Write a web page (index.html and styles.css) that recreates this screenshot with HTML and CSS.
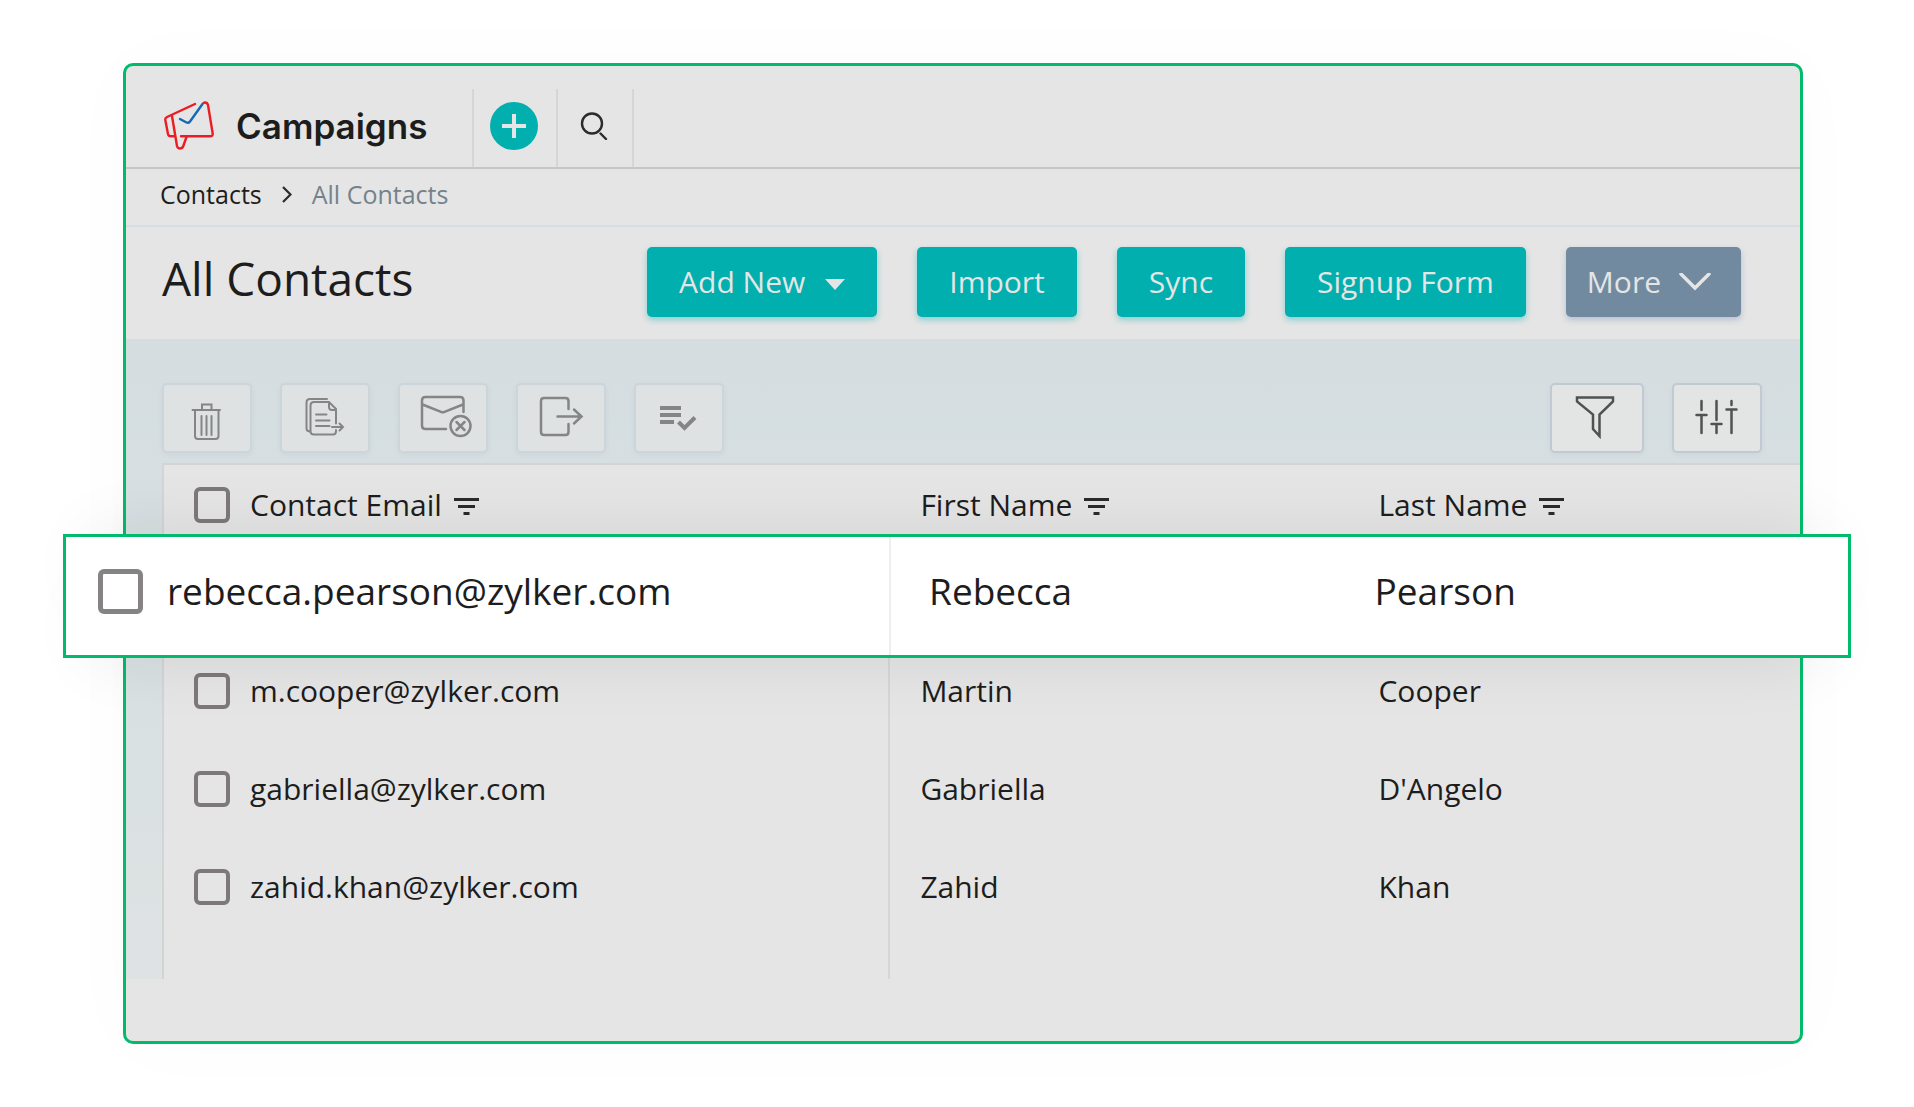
FILE: index.html
```html
<!DOCTYPE html>
<html lang="en">
<head>
  <meta charset="utf-8">
  <meta name="viewport" content="width=device-width, initial-scale=1">
  <title>Campaigns - All Contacts</title>
  <link rel="stylesheet" href="styles.css">
</head>
<body>
  <main class="panel">
    <header class="topbar">
      <a class="brand" href="#">
        <svg class="brand__logo" viewBox="0 0 50 50" aria-hidden="true">
          <g fill="none" stroke-width="2.4" stroke-linecap="round" stroke-linejoin="round">
            <g stroke="#ec1c24">
              <path d="M31 3 3 16Q1 17 1.300 19L4 33Q4.500 35.300 7 35.300H10"/>
              <path d="M8 15 13 45Q13.600 47.500 16 47.500T19.300 45L22.500 36"/>
              <path d="M17 35.300H46Q49 35.300 48.700 32.500L44 4Q43.300 1.300 40.500 1.500L39.500 2"/>
            </g>
            <path stroke="#1568b8" d="M16 18 22.500 21.500Q24.500 22.500 26 20.500L38.500 3"/>
          </g>
        </svg>
        <span class="brand__name">Campaigns</span>
      </a>
      <div class="topbar__cell topbar__cell--add">
        <button class="round-button" type="button" aria-label="Create">
          <svg class="round-button__icon" viewBox="0 0 24 24" aria-hidden="true">
            <path d="M12 0V24M0 12H24" fill="none" stroke="#e5e5e5" stroke-width="4"/>
          </svg>
        </button>
      </div>
      <div class="topbar__cell topbar__cell--search">
        <button class="plain-button" type="button" aria-label="Search">
          <svg class="plain-button__icon" viewBox="0 0 28 28" aria-hidden="true">
            <g fill="none" stroke="#2b2b2b" stroke-width="2.400" stroke-linecap="round">
              <circle cx="12" cy="11.500" r="10"/>
              <path d="M20.500 21.500 26 27"/>
            </g>
          </svg>
        </button>
      </div>
    </header>

    <nav class="crumbs" aria-label="Breadcrumb">
      <a class="crumbs__link" href="#">Contacts</a>
      <svg class="crumbs__arrow" viewBox="0 0 10 18" aria-hidden="true">
        <path d="M1 2 8.500 9.500 1 17" fill="none" stroke="#2b2b2b" stroke-width="2.200"/>
      </svg>
      <span class="crumbs__current">All Contacts</span>
    </nav>

    <div class="heading">
      <h1 class="heading__title">All Contacts</h1>
      <div class="heading__actions">
        <button class="button" type="button" aria-haspopup="menu">Add New
          <svg class="button__caret" viewBox="0 0 20 16" aria-hidden="true"><path d="M0 5H20L10 16Z" fill="#e5e5e5"/></svg>
        </button>
        <button class="button" type="button">Import</button>
        <button class="button" type="button">Sync</button>
        <button class="button" type="button">Signup Form</button>
        <button class="button button--more" type="button" aria-haspopup="menu">More
          <svg class="button__chevron" viewBox="0 0 32 18" aria-hidden="true"><path d="M2 1 16 15 30 1" fill="none" stroke="#e5e5e5" stroke-width="3.500" stroke-linecap="round"/></svg>
        </button>
      </div>
    </div>

    <section class="workspace">
      <div class="toolbar">
        <button class="tool" type="button" disabled aria-label="Delete">
          <svg class="tool__icon" viewBox="0 0 86 66" aria-hidden="true">
            <path d="M28.500 25H56M38 25V19.500H47.500V25M31 25V51Q31 54 34 54H51.500Q54.500 54 54.500 51V25M37.500 31V50M42.500 31V50M47.500 31V50"/>
          </svg>
        </button>
        <button class="tool" type="button" disabled aria-label="Copy to list">
          <svg class="tool__icon" viewBox="0 0 86 66" aria-hidden="true">
            <path d="M45 14H28Q24.500 14 24.500 17.500V43.500Q24.500 46 27.500 46.500M54 38.500V24L47 17H32Q28.500 17 28.500 20.500V46Q28.500 49.500 32 49.500H51Q54 49.500 54 46V45M47 17V22Q47 25 50 25H54M34 29.500H44.500M34 35.500H47.500M34 41H47.500M50 42H61M57.500 38.500 61 42 57.500 45.500"/>
          </svg>
        </button>
        <button class="tool" type="button" disabled aria-label="Unsubscribe">
          <svg class="tool__icon tool__icon--bold" viewBox="0 0 86 66" aria-hidden="true">
            <path d="M63.500 27V15.500Q63.500 12 60 12H25.500Q22 12 22 15.500V40.500Q22 44 25.500 44H46M22.500 19.500 41 26.800Q42.700 27.600 44.500 26.800L63 19.500M56.500 37 64.500 45M64.500 37 56.500 45"/>
            <circle cx="60.500" cy="41" r="10"/>
          </svg>
        </button>
        <button class="tool" type="button" disabled aria-label="Export">
          <svg class="tool__icon tool__icon--bold" viewBox="0 0 86 66" aria-hidden="true">
            <path d="M50.500 24V16Q50.500 13 47.500 13H26Q23 13 23 16V47Q23 50 26 50H47.500Q50.500 50 50.500 47V39M39.500 31.500H63.500M56 24.500 63.500 31.500 56 38.500"/>
          </svg>
        </button>
        <button class="tool" type="button" disabled aria-label="Mark as done">
          <svg class="tool__icon tool__icon--block" viewBox="0 0 86 66" aria-hidden="true">
            <path d="M24 23H45M24 30H45M24 37H38M42.500 37 48.500 43 59 32.500"/>
          </svg>
        </button>
        <div class="toolbar__end">
          <button class="tool tool--active tool--wide" type="button" aria-label="Filter">
            <svg class="tool__icon tool__icon--bold" viewBox="0 0 90 66" aria-hidden="true">
              <path d="M25 12.500H61V16.500L47.500 29.500V51L41 44V29.500L25 16.500Z"/>
            </svg>
          </button>
          <button class="tool tool--active" type="button" aria-label="Manage columns">
            <svg class="tool__icon tool__icon--bold" viewBox="0 0 86 66" aria-hidden="true">
              <path d="M27.500 16V25M27.500 30V48M22.500 30H32.500M42.500 16V35M42.500 39V48M37.500 39H47.500M57.500 16V20M57.500 24.500V48M52.500 24.500H62.500"/>
            </svg>
          </button>
        </div>
      </div>

      <div class="sheet">
        <table class="contacts">
          <colgroup>
            <col class="contacts__email"><col class="contacts__first"><col>
          </colgroup>
          <thead>
            <tr>
              <th scope="col">
                <label class="pick"><input class="checkbox" type="checkbox">Contact Email
                  <svg class="sort" viewBox="0 0 25 21" aria-hidden="true"><path d="M0 5.500H25M4 12.500H21M9.500 19.500H15.500"/></svg>
                </label>
              </th>
              <th scope="col">
                <span class="column-name">First Name
                  <svg class="sort" viewBox="0 0 25 21" aria-hidden="true"><path d="M0 5.500H25M4 12.500H21M9.500 19.500H15.500"/></svg>
                </span>
              </th>
              <th scope="col">
                <span class="column-name">Last Name
                  <svg class="sort" viewBox="0 0 25 21" aria-hidden="true"><path d="M0 5.500H25M4 12.500H21M9.500 19.500H15.500"/></svg>
                </span>
              </th>
            </tr>
          </thead>
          <tbody>
            <tr>
              <td class="contacts__slot" colspan="3">
                <div class="spotlight">
                  <table class="spotlight__table">
                    <colgroup>
                      <col class="spotlight__email"><col class="spotlight__first"><col>
                    </colgroup>
                    <tbody>
                      <tr>
                        <td><label class="pick pick--large"><input class="checkbox checkbox--large" type="checkbox">rebecca.pearson@zylker.com</label></td>
                        <td>Rebecca</td>
                        <td>Pearson</td>
                      </tr>
                    </tbody>
                  </table>
                </div>
              </td>
            </tr>
            <tr>
              <td><label class="pick"><input class="checkbox" type="checkbox">m.cooper@zylker.com</label></td>
              <td>Martin</td>
              <td>Cooper</td>
            </tr>
            <tr>
              <td><label class="pick"><input class="checkbox" type="checkbox">gabriella@zylker.com</label></td>
              <td>Gabriella</td>
              <td>D'Angelo</td>
            </tr>
            <tr>
              <td><label class="pick"><input class="checkbox" type="checkbox">zahid.khan@zylker.com</label></td>
              <td>Zahid</td>
              <td>Khan</td>
            </tr>
          </tbody>
          <tfoot>
            <tr><td></td><td></td><td></td></tr>
          </tfoot>
        </table>
      </div>
    </section>
  </main>
</body>
</html>
```
FILE: styles.css
```css
:root {
  --green: #00bb6b;
  --teal: #00afae;
  --slate: #728aa0;
  --surface: #e5e5e5;
  --ink: #1d1d1d;
  --text: 30px;
}

*,
*::before,
*::after {
  box-sizing: border-box;
}

body {
  margin: 0;
  padding: 63px 111px 63px 123px;
  background: #fff;
  color: var(--ink);
  font: 400 var(--text) / 40px "Open Sans", "Noto Sans", sans-serif;
}

button {
  margin: 0;
  padding: 0;
  border: 0;
  background: none;
  color: inherit;
  font: inherit;
}

svg {
  display: block;
  flex: none;
}

.panel {
  padding-bottom: 62px;
  border: 3px solid var(--green);
  border-radius: 10px;
  background: var(--surface);
  box-shadow: 0 0 80px rgba(0, 0, 0, 0.02);
}

/* Top bar */

.topbar {
  display: flex;
  padding-top: 23px;
  border-bottom: 2px solid #c6c6c6;
}

.brand {
  display: flex;
  align-items: center;
  gap: 22px;
  width: 346px;
  height: 78px;
  padding: 0 0 4px 38px;
  color: var(--ink);
  text-decoration: none;
}

.brand__logo {
  width: 50px;
  height: 50px;
}

.brand__name {
  font: 600 35px / 40px Inter, "Open Sans", sans-serif;
}

.topbar__cell {
  display: flex;
  align-items: center;
  justify-content: center;
  padding: 0 2px 4px 0;
  border-left: 2px solid #d6d6d6;
}

.topbar__cell--add {
  width: 84px;
}

.topbar__cell--search {
  width: 78px;
  border-right: 2px solid #d6d6d6;
}

.round-button {
  display: grid;
  place-items: center;
  width: 48px;
  height: 48px;
  border-radius: 50%;
  background: var(--teal);
}

.round-button__icon {
  width: 24px;
  height: 24px;
}

.plain-button__icon {
  width: 28px;
  height: 28px;
}

/* Breadcrumb */

.crumbs {
  display: flex;
  align-items: center;
  gap: 20px;
  height: 58px;
  padding: 0 34px 6px;
  border-bottom: 2px solid #d5dde0;
  font-size: 25px;
  line-height: 32px;
}

.crumbs__link {
  color: var(--ink);
  text-decoration: none;
}

.crumbs__arrow {
  width: 10px;
  height: 18px;
}

.crumbs__current {
  color: #74828c;
}

/* Page heading */

.heading {
  display: flex;
  align-items: center;
  justify-content: space-between;
  height: 112px;
  padding: 0 59px 2px 36px;
}

.heading__title {
  margin: 0;
  padding-bottom: 8px;
  font-size: 46px;
  font-weight: 400;
  line-height: 60px;
}

.heading__actions {
  display: flex;
  gap: 40px;
}

.button {
  display: flex;
  align-items: center;
  gap: 20px;
  height: 70px;
  padding: 0 32px;
  border-radius: 5px;
  background: var(--teal);
  box-shadow: 0 3px 6px rgba(0, 175, 174, 0.4);
  color: var(--surface);
}

.button--more {
  gap: 18px;
  padding: 0 30px 0 21px;
  background: var(--slate);
  box-shadow: 0 3px 6px rgba(114, 138, 180, 0.4);
}

.button__caret {
  width: 20px;
  height: 16px;
}

.button__chevron {
  width: 32px;
  height: 18px;
}

/* Toolbar */

.workspace {
  background: linear-gradient(#d5dde1, #d7e0e2 40%, #dee2e3);
}

.toolbar {
  display: flex;
  gap: 28px;
  padding: 44px 38px 10px 36px;
}

.toolbar__end {
  display: flex;
  gap: 28px;
  margin-left: auto;
}

.tool {
  width: 90px;
  height: 70px;
  border: 2px solid #ccd5da;
  border-radius: 5px;
  background: #dfe2e3;
  box-shadow: 0 2px 6px rgba(0, 0, 0, 0.04);
  color: #848586;
}

.tool--active {
  border-color: #c1cad2;
  background: #e3e5e5;
  color: #505151;
}

.tool--wide {
  width: 94px;
}

.tool__icon {
  width: 100%;
  height: 66px;
  fill: none;
  stroke: currentColor;
  stroke-width: 2;
  stroke-linecap: round;
}

.tool__icon--bold {
  stroke-width: 2.5;
}

.tool__icon--block {
  stroke-width: 4;
  stroke-linecap: butt;
}

/* Contacts table */

.sheet {
  padding-left: 36px;
}

.contacts {
  width: 100%;
  border-collapse: separate;
  border-spacing: 0;
  border-top: 2px solid #d3d4d5;
  border-left: 2px solid #d3d4d5;
  background: var(--surface);
  table-layout: fixed;
}

.contacts__email {
  width: 44.4%;
}

.contacts__first {
  width: 28%;
}

.contacts th,
.contacts td {
  height: 98px;
  padding: 0 30px;
  font-weight: 400;
  text-align: left;
  vertical-align: middle;
}

.contacts th {
  height: 79px;
}

.contacts td:first-child:not([colspan]) {
  border-right: 2px solid #d6d6d6;
}

.contacts tfoot td {
  height: 43px;
}

.pick,
.column-name {
  display: flex;
  align-items: center;
  gap: 12px;
}

.pick {
  gap: 20px;
}

.pick .sort {
  margin-left: -8px;
}

.checkbox {
  flex: none;
  width: 36px;
  height: 36px;
  margin: 0;
  border: 4px solid #7d7979;
  border-radius: 6px;
  appearance: none;
}

.sort {
  width: 25px;
  height: 21px;
  fill: none;
  stroke: #2b2b2b;
  stroke-width: 3;
}

/* Enlarged row that overlaps both sides of the panel */

.contacts .contacts__slot {
  position: relative;
  padding: 0;
}

.spotlight {
  position: absolute;
  top: -10px;
  right: -51px;
  bottom: -16px;
  left: -101px;
  border: 3px solid var(--green);
  background: #fff;
  box-shadow: 0 30px 70px -32px rgba(0, 0, 0, 0.09), 0 -30px 70px -32px rgba(0, 0, 0, 0.09);
}

.spotlight__table {
  width: 100%;
  height: 100%;
  border-spacing: 0;
  font-size: 37px;
  line-height: 48px;
  table-layout: fixed;
}

.spotlight__email {
  width: 46.3%;
}

.spotlight__first {
  width: 25%;
}

.contacts .spotlight__table td {
  height: auto;
  padding: 0 38px 10px;
}

.contacts .spotlight__table td:first-child {
  padding-left: 32px;
  border-right-color: #eee;
}

.pick--large {
  gap: 24px;
}

.checkbox--large {
  width: 45px;
  height: 45px;
  border-width: 5px;
  border-color: #858383;
}
```
